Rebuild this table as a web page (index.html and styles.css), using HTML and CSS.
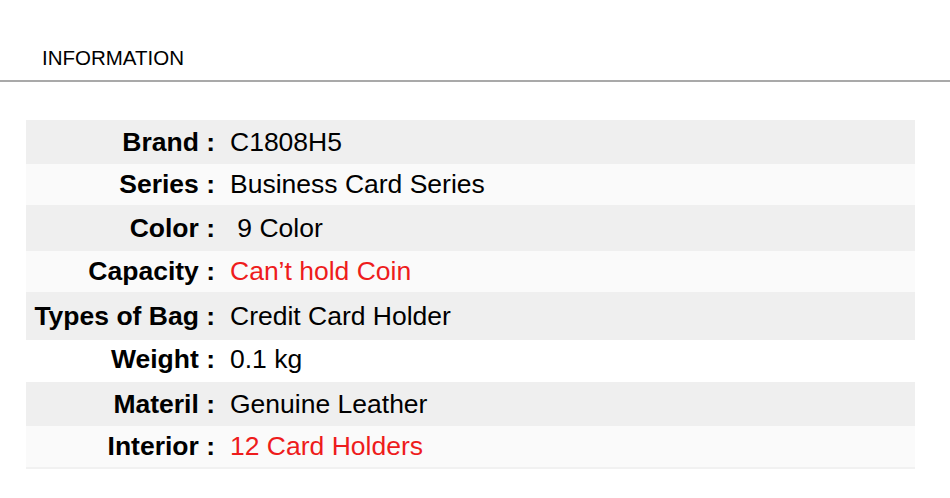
FILE: index.html
```html
<!DOCTYPE html>
<html>
<head>
<meta charset="utf-8">
<link rel="stylesheet" href="styles.css">
</head>
<body>
<div class="page">
  <div class="tabbar">
    <div class="tab">INFORMATION</div>
  </div>
  <div class="specs">
    <div class="row dark h44"><div class="label">Brand :</div><div class="value">C1808H5</div></div>
    <div class="row light h41"><div class="label">Series :</div><div class="value">Business Card Series</div></div>
    <div class="row dark h46"><div class="label">Color :</div><div class="value">&nbsp;9 Color</div></div>
    <div class="row light h41"><div class="label">Capacity :</div><div class="value red">Can’t hold Coin</div></div>
    <div class="row dark h48"><div class="label">Types of Bag :</div><div class="value">Credit Card Holder</div></div>
    <div class="row white h42 up"><div class="label">Weight :</div><div class="value">0.1 kg</div></div>
    <div class="row dark h44"><div class="label">Materil :</div><div class="value">Genuine Leather</div></div>
    <div class="row light h41 last"><div class="label">Interior :</div><div class="value red">12 Card Holders</div></div>
  </div>
</div>
</body>
</html>
```
FILE: styles.css
```css
html, body {
  margin: 0;
  padding: 0;
  background: #ffffff;
}
.page {
  width: 950px;
  height: 498px;
  font-family: "Liberation Sans", Arial, sans-serif;
  color: #000;
}
.tabbar {
  padding-top: 46px;
  height: 34px;
  border-bottom: 2px solid #a9a9a9;
  box-sizing: content-box;
}
.tab {
  margin-left: 42px;
  font-size: 20.5px;
  line-height: 24px;
  height: 24px;
}
.specs {
  margin-top: 38px;
  margin-left: 26px;
  width: 889px;
}
.row {
  display: flex;
  align-items: center;
}
.row.up {
  padding-bottom: 3px;
  box-sizing: border-box;
}
.dark { background: #efefef; }
.light { background: #fafafa; }
.white { background: #ffffff; }
.last { border-bottom: 2px solid #f1f1f1; }
.h41 { height: 41px; }
.h42 { height: 42px; }
.h44 { height: 44px; }
.h46 { height: 46px; }
.h48 { height: 48px; }
.label {
  width: 189px;
  text-align: right;
  font-weight: bold;
  font-size: 26.5px;
  white-space: pre;
}
.value {
  margin-left: 15px;
  font-size: 26.5px;
}
.red { color: #ee1c1c; }
```
